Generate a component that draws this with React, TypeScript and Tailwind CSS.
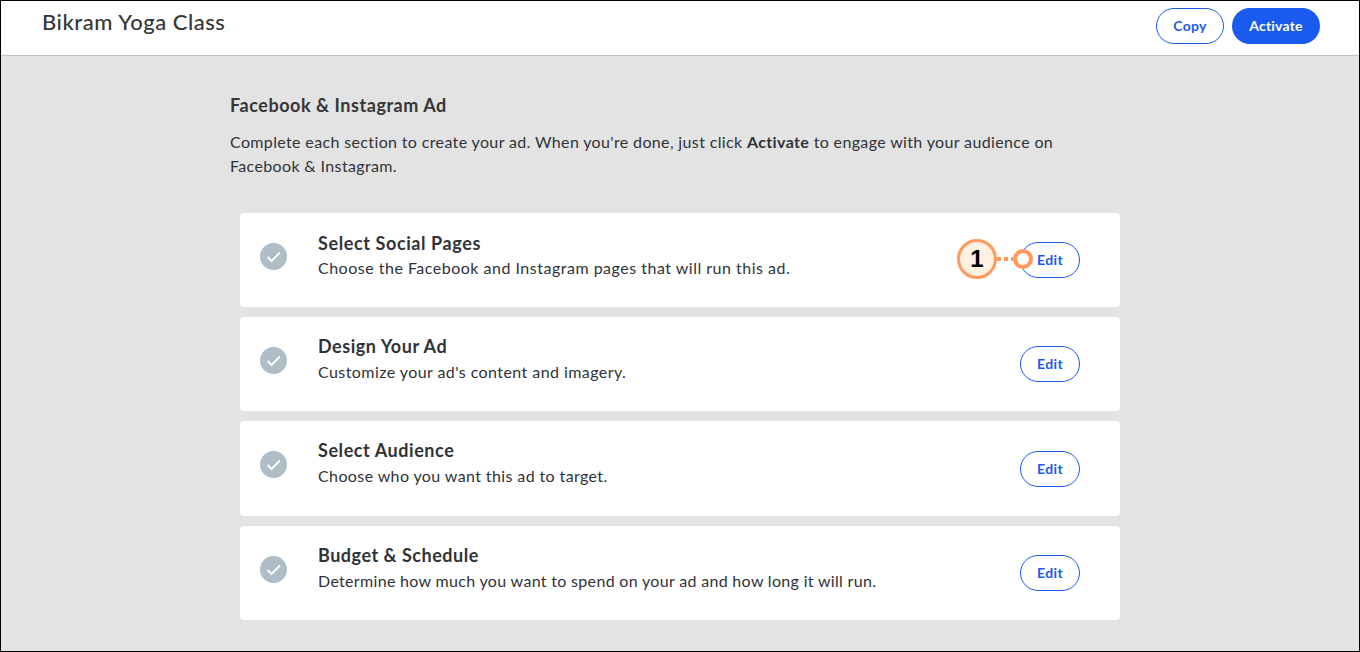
import React from "react";

function Check() {
  return (
    <div className="mb-2 flex h-[27px] w-[27px] shrink-0 items-center justify-center rounded-full bg-[#afbdc6]">
      <svg width="27" height="27" viewBox="0 0 27 27" fill="none">
        <path d="M7.5 14 L11.5 18 L20 9.5" stroke="#ffffff" strokeWidth="1.8" />
      </svg>
    </div>
  );
}

const rows = [
  { t: "Select Social Pages", d: "Choose the Facebook and Instagram pages that will run this ad.", h: "h-[94px]", m: "mb-[9px]", g: "mt-[1px]", ts: "tracking-[0.6px]", ds: "tracking-[0.5px]", mark: true },
  { t: "Design Your Ad", d: "Customize your ad's content and imagery.", h: "h-[94px]", m: "mb-[10px]", g: "mt-[2px]", ts: "tracking-[0.53px]", ds: "tracking-[0.43px]", mark: false },
  { t: "Select Audience", d: "Choose who you want this ad to target.", h: "h-[95px]", m: "mb-[11px]", g: "mt-[2px]", ts: "tracking-[0.57px]", ds: "tracking-[0.39px]", mark: false },
  { t: "Budget & Schedule", d: "Determine how much you want to spend on your ad and how long it will run.", h: "h-[94px]", m: "mb-[10px]", g: "mt-[2px]", ts: "tracking-[0.51px]", ds: "tracking-[0.32px]", mark: false },
];

export default function App() {
  return (
    <div className="flex h-[652px] w-[1360px] flex-col overflow-hidden border border-black bg-[#e3e3e3] font-['Lato','Liberation_Sans',sans-serif] text-[#2f3338]">
      <header className="flex h-[55px] shrink-0 items-center justify-between border-b border-[#c4c4c4] bg-white pl-[41px] pr-[39px]">
        <h1 className="mb-[12px] text-[22px] font-medium leading-7 tracking-[0.53px] text-[#363636]">Bikram Yoga Class</h1>
        <div className="mb-[4px] flex items-center gap-2">
          <button className="flex h-9 w-[68px] items-center justify-center rounded-full border border-[#1a5aee] bg-white text-sm font-bold tracking-[0.3px] text-[#1a5aee]">Copy</button>
          <button className="flex h-9 w-[88px] items-center justify-center rounded-full bg-[#1a5aee] text-sm font-bold tracking-[0.2px] text-white">Activate</button>
        </div>
      </header>
      <main className="flex-1 pl-[229px] pt-[37px]">
        <h2 className="text-[18px] font-bold leading-6 tracking-[0.55px] text-[#363636]">Facebook &amp; Instagram Ad</h2>
        <p className="mt-[13px] w-[860px] text-[16px] leading-6 tracking-[0.36px]">
          Complete each section to create your ad. When you're done, just click <strong>Activate</strong> to engage with your audience on Facebook &amp; Instagram.
        </p>
        <div className="ml-[10px] mt-[35px] flex w-[880px] flex-col gap-[10px]">
          {rows.map((r) => (
            <section key={r.t} className={`relative flex items-center rounded-[4px] bg-white pl-5 pr-10 ${r.h}`}>
              <Check />
              <div className={`ml-[31px] flex-1 ${r.m}`}>
                <h3 className={`text-[18px] font-bold leading-6 ${r.ts}`}>{r.t}</h3>
                <p className={`text-[16px] leading-6 ${r.g} ${r.ds}`}>{r.d}</p>
              </div>
              <button className="flex h-9 w-[60px] items-center justify-center rounded-full border border-[#1a5aee] bg-white text-sm font-bold tracking-[0.4px] text-[#1a5aee]">Edit</button>
              {r.mark && (
                <div className="absolute left-[717px] top-[26px] flex items-center">
                  <div className="flex h-[40px] w-[40px] items-center justify-center rounded-full border-[3px] border-[#ff9a5c] bg-[#fff1e2] font-['Liberation_Sans',sans-serif] text-[24px] font-bold text-black">1</div>
                  <div className="h-[4px] w-[16px] bg-[repeating-linear-gradient(90deg,#ff9a5c_0,#ff9a5c_4px,transparent_4px,transparent_7px)]" />
                  <div className="h-[20px] w-[20px] rounded-full border-[4px] border-[#ff9a5c] bg-white" />
                </div>
              )}
            </section>
          ))}
        </div>
      </main>
    </div>
  );
}
